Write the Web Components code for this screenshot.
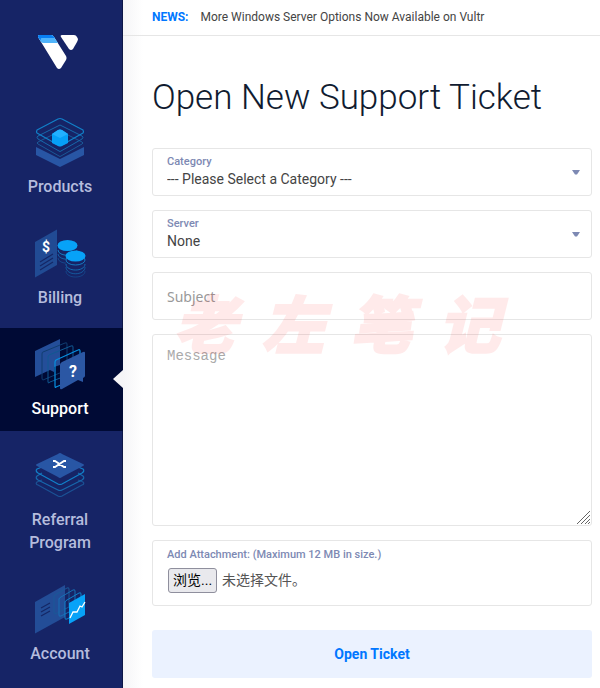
<!DOCTYPE html>
<html lang="en">
<head>
<meta charset="utf-8">
<meta name="viewport" content="width=device-width, initial-scale=1">
<title>Open New Support Ticket</title>
<style>
    html, body {
        margin: 0;
        min-height: 100%;
        background: #fff;
    }
    body {
        font-family: Roboto, "Noto Sans CJK SC", sans-serif;
        color: #444;
        --blue: #0077ff;
        --label: #7d89b3;
        --line: #e6e6e6;
    }
</style>
</head>
<body>
<support-app></support-app>

<script>
const icons = {
    products: `
        <path d="M1 30 25 42 49 30V38L25 50 1 38Z" fill="#2856a5"/>
        <g fill="none" stroke-linejoin="round">
            <path d="M25 14 47 25Q49 26 47 27L26 39Q25 40 24 39L3 27Q1 26 3 25Z" stroke="#1a5897"/>
            <path d="M25 8 47 19Q49 20 47 22L26 34Q25 35 24 34L3 22Q1 20 3 19Z" stroke="#1768aa"/>
            <path d="M23 2Q25 1 27 2L48 13Q49 15 48 16L27 28Q25 29 23 28L2 16Q1 15 2 13Z" stroke="#1180c9" stroke-width="1.200"/>
        </g>
        <path d="M17 17 23 13Q25 12 27 13L33 17V26L27 29Q25 30 23 29L17 26Z" fill="#06a0f7"/>
        <path d="M17 17 23 13Q25 12 27 13L33 17 25 21Z" fill="#22b0ff"/>`,
    billing: `
        <path d="M0 14 22 1.500V37L0 49.500Z" fill="#214b94"/>
        <text x="11" y="24" text-anchor="middle" font-size="14" font-weight="700" fill="#fff">$</text>
        <path d="M5 34 18 26M5 38 18 30M5 42 18 34" stroke="#152765" stroke-width="1.200"/>
        <g fill="none" stroke="#147bc2">
            <path d="M23 22C23 29 42 29 42 22"/>
            <path d="M23 26C23 33 42 33 42 26" opacity=".7"/>
            <path d="M23 30C23 37 42 37 42 30" opacity=".4"/>
        </g>
        <ellipse cx="32.500" cy="17.500" rx="10" ry="5.500" fill="#07a2f8"/>
        <path d="M31 28V43H50V28Z" fill="#162466"/>
        <g fill="none" stroke="#147bc2">
            <ellipse cx="40.500" cy="32" rx="9.500" ry="5"/>
            <path d="M31 36C31 44 50 44 50 36" opacity=".8"/>
            <path d="M31 39C31 48 50 48 50 39" opacity=".6"/>
            <path d="M31 43C31 51 50 51 50 43" opacity=".35"/>
        </g>
        <ellipse cx="40.500" cy="28" rx="10" ry="5.500" fill="#07a2f8"/>`,
    support: `
        <path d="M0 12 25 0V26L19 28V33L15 31 0 38Z" fill="#244e99"/>
        <g fill="none" stroke-linejoin="round">
            <path d="M8 13 30 4Q32 3 32 5V31L8 41Q7 41 7 39V15Q7 13 8 13Z" stroke="#103d70"/>
            <path d="M14 16 36 7Q38 6 38 8V34L15 43Q13 45 13 43V19Q13 17 14 16Z" stroke="#105992"/>
            <path d="M21 21 43 11Q45 10 45 12V38L21 48Q20 49 20 47V23Q20 22 21 21Z" stroke="#078fdf" stroke-width="1.200"/>
        </g>
        <path d="M27 23 48 13Q50 12 50 14V37Q50 38 48 39V43L43 41 27 50Q25 51 25 49V26Q25 24 27 23Z" fill="#2b57a4"/>
        <text x="38" y="38" text-anchor="middle" font-size="16" font-weight="700" fill="#fff">?</text>`,
    referral: `
        <g fill="none" stroke-linejoin="round" stroke-width="1.200">
            <path d="M7 30 2 32Q0 34 3 35L23 46Q25 47 27 46L47 35Q50 34 48 32L43 30" stroke="#1b5295"/>
            <path d="M7 23 2 26Q0 28 3 30L23 40Q25 41 27 40L47 30Q50 28 48 26L43 23" stroke="#1768ad"/>
            <path d="M7 17 2 19Q0 21 3 23L23 34Q25 35 27 34L47 23Q50 21 48 19L43 17" stroke="#1180c9"/>
        </g>
        <path d="M23 4Q25 2 27 4L48 14Q50 15 48 16L27 27Q25 29 23 27L2 16Q0 15 2 14Z" fill="#2856a5"/>
        <path d="M18 11H20L29 17H31M18 17H20L29 11H31" fill="none" stroke="#fff" stroke-width="1.800"/>`,
    account: `
        <path d="M0 18 30 1V33L0 49.500Z" fill="#234d97"/>
        <path d="M6 24 15 19M6 28 15 23M6 32 15 27" stroke="#152765" stroke-width="1.200"/>
        <g fill="none" stroke-linejoin="round">
            <path d="M20 11 32 4Q34 3 34 5V23L20 30Q19 30 19 28V13Q19 12 20 11Z" stroke="#1a5898"/>
            <path d="M26 13 38 6Q40 5 40 7V25L26 32Q24 33 24 31V15Q24 14 26 13Z" stroke="#176fb4"/>
            <path d="M32 16 44 9Q46 8 46 10V28L32 35Q30 36 30 34V18Q30 17 32 16Z" stroke="#1180c9"/>
        </g>
        <path d="M34 19 50 10V31L34 40Z" fill="#07a2f8"/>
        <path d="M35 34 38 28 42 28 45 22 47 23 50 18" fill="none" stroke="#fff" stroke-width="1.300"/>`
};

class SupportApp extends HTMLElement {
    constructor() {
        super();
        this.attachShadow({ mode: 'open' });
        this.shadowRoot.innerHTML = `
            <style>
                :host {
                    display: grid;
                    grid-template-columns: 123px minmax(0, 1fr);
                    min-height: 100vh;
                }
                main {
                    background: linear-gradient(90deg, #f5f5f7, #fff 20px);
                }
                .content {
                    padding: 37px 8px 8px 29px;
                }
                h1 {
                    margin: 0 0 25px;
                    font-size: 35px;
                    line-height: 50px;
                    font-weight: 300;
                    color: #101b30;
                }
            </style>
            <side-nav>
                <nav-item icon="products">Products</nav-item>
                <nav-item icon="billing">Billing</nav-item>
                <nav-item icon="support" active>Support</nav-item>
                <nav-item icon="referral">Referral Program</nav-item>
                <nav-item icon="account">Account</nav-item>
            </side-nav>
            <main>
                <news-bar>More Windows Server Options Now Available on Vultr</news-bar>
                <div class="content">
                    <h1>Open New Support Ticket</h1>
                    <ticket-form></ticket-form>
                </div>
            </main>`;
    }
}

class SideNav extends HTMLElement {
    constructor() {
        super();
        this.attachShadow({ mode: 'open' });
        this.shadowRoot.innerHTML = `
            <style>
                :host {
                    display: block;
                    background: #162466;
                    box-shadow: inset -1px 0 #0d1747;
                }
                nav {
                    display: flex;
                    flex-direction: column;
                    gap: 8px;
                }
                .logo {
                    display: block;
                    padding: 35px 0 33px 38px;
                }
                svg {
                    display: block;
                }
            </style>
            <a class="logo" href="#" aria-label="Home">
                <svg width="40" height="38" viewBox="0 0 40 38">
                    <path d="M0 2Q-1 0 2 0H13Q15 0 16 2L28 21Q29 23 28 25L23 33Q21 35 19 33Z" fill="#fff"/>
                    <path d="M0 2Q-1 0 2 0H13Q15 0 16 2L20 8H6Q4 8 3 7Z" fill="#50b4fb"/>
                    <path d="M0 2Q-1 0 2 0H13Q15 0 17 3H4Q2 3 3 6Z" fill="#087ef2"/>
                    <path d="M23 2Q22 0 24 0H36Q38 0 39 2L40 4Q40 5 39 7L35 14Q33 16 31 14Z" fill="#fff"/>
                </svg>
            </a>
            <nav><slot></slot></nav>`;
    }
}

class NavItem extends HTMLElement {
    constructor() {
        super();
        this.attachShadow({ mode: 'open' });
    }

    connectedCallback() {
        this.shadowRoot.innerHTML = `
            <style>
                :host {
                    display: block;
                    position: relative;
                    color: #b5bcdd;
                }
                :host([active]) {
                    background: #000a35;
                    color: #fff;
                }
                :host([active])::after {
                    content: "";
                    position: absolute;
                    right: 0;
                    top: 42px;
                    border: solid transparent;
                    border-width: 9px 10px 9px 0;
                    border-right-color: #f5f5f7;
                }
                a {
                    display: flex;
                    flex-direction: column;
                    align-items: center;
                    gap: 8px;
                    padding: 11px 20px 11px 17px;
                    color: inherit;
                    font-size: 16px;
                    line-height: 23px;
                    font-weight: 500;
                    text-align: center;
                    text-decoration: none;
                }
                svg {
                    display: block;
                    overflow: visible;
                }
            </style>
            <a href="#">
                <svg width="50" height="50" viewBox="0 0 50 50">${icons[this.getAttribute('icon')]}</svg>
                <slot></slot>
            </a>`;
    }
}

class NewsBar extends HTMLElement {
    constructor() {
        super();
        this.attachShadow({ mode: 'open' });
        this.shadowRoot.innerHTML = `
            <style>
                :host {
                    display: flex;
                    gap: 12px;
                    padding: 7px 8px 8px 29px;
                    border-bottom: 1px solid var(--line);
                    font-size: 12px;
                    line-height: 20px;
                }
                b {
                    color: var(--blue);
                }
            </style>
            <b>NEWS:</b>
            <span><slot></slot></span>`;
    }
}

class SelectField extends HTMLElement {
    constructor() {
        super();
        this.attachShadow({ mode: 'open' });
    }

    connectedCallback() {
        this.shadowRoot.innerHTML = `
            <style>
                :host {
                    display: grid;
                    grid-template-areas: "box";
                    background: #fff;
                    border: 1px solid var(--line);
                    border-radius: 3px;
                }
                label, select, svg {
                    grid-area: box;
                }
                label {
                    z-index: 1;
                    justify-self: start;
                    align-self: start;
                    padding: 6px 14px 0;
                    font-size: 11px;
                    line-height: 14px;
                    font-weight: 500;
                    color: var(--label);
                }
                select {
                    appearance: none;
                    width: 100%;
                    height: 46px;
                    margin: 0;
                    padding: 16px 30px 2px 14px;
                    border: 0;
                    border-radius: 3px;
                    background: transparent;
                    font: 14px Roboto, sans-serif;
                    color: #444;
                }
                svg {
                    justify-self: end;
                    align-self: center;
                    margin-right: 11px;
                    pointer-events: none;
                }
            </style>
            <label for="value">${this.getAttribute('label')}</label>
            <select id="value"><option>${this.getAttribute('value')}</option></select>
            <svg width="8" height="5" viewBox="0 0 8 5"><path d="M0 0H8L5 4.500H3Z" fill="#7d89b3"/></svg>`;
    }
}

class FileField extends HTMLElement {
    constructor() {
        super();
        this.attachShadow({ mode: 'open' });
        this.shadowRoot.innerHTML = `
            <style>
                :host {
                    display: block;
                    padding: 7px 14px 12px;
                    background: #fff;
                    border: 1px solid var(--line);
                    border-radius: 3px;
                }
                .title {
                    display: block;
                    margin-bottom: 6px;
                    font-size: 11px;
                    line-height: 14px;
                    font-weight: 500;
                    color: var(--label);
                }
                .picker {
                    display: flex;
                    align-items: center;
                    gap: 5px;
                    position: relative;
                    margin-left: 1px;
                    font-size: 14px;
                    line-height: 23px;
                    color: #555;
                }
                .browse {
                    padding: 0 4px;
                    border: 1px solid #8f8f9d;
                    border-radius: 3px;
                    background: #e9e9ed;
                    color: #000;
                }
                input {
                    position: absolute;
                    inset: 0;
                    width: 100%;
                    opacity: 0;
                }
            </style>
            <label class="title" for="file">Add Attachment: (Maximum 12 MB in size.)</label>
            <div class="picker" lang="zh-CN">
                <span class="browse">浏览...</span>
                <span class="name">未选择文件。</span>
                <input id="file" type="file">
            </div>`;

        const input = this.shadowRoot.getElementById('file');
        input.addEventListener('change', () => {
            if (input.files.length) {
                this.shadowRoot.querySelector('.name').textContent = input.files[0].name;
            }
        });
    }
}

class WaterMark extends HTMLElement {
    constructor() {
        super();
        this.attachShadow({ mode: 'open' });
        this.shadowRoot.innerHTML = `
            <style>
                :host {
                    display: flex;
                    gap: 26px;
                    pointer-events: none;
                    font: italic 900 62px/62px "Noto Sans CJK SC", sans-serif;
                    color: #f00;
                    -webkit-text-stroke: 2px #f00;
                    opacity: .08;
                }
            </style>
            <span>老</span><span>左</span><span>笔</span><span>记</span>`;
    }
}

class TicketForm extends HTMLElement {
    constructor() {
        super();
        this.attachShadow({ mode: 'open' });
        this.shadowRoot.innerHTML = `
            <style>
                :host {
                    display: block;
                    position: relative;
                }
                form {
                    display: flex;
                    flex-direction: column;
                    gap: 14px;
                }
                input, textarea {
                    display: block;
                    box-sizing: border-box;
                    width: 100%;
                    margin: 0;
                    padding: 0 14px;
                    border: 1px solid var(--line);
                    border-radius: 3px;
                    background: #fff;
                    color: #444;
                }
                input {
                    height: 48px;
                    font: 14px "Noto Sans", sans-serif;
                }
                textarea {
                    height: 192px;
                    padding: 12px 14px;
                    font: 14px/18px "Liberation Mono", monospace;
                    resize: vertical;
                }
                textarea::-webkit-resizer {
                    background: transparent;
                }
                ::placeholder {
                    color: #999;
                }
                textarea::placeholder {
                    color: #aaa;
                }
                .message {
                    position: relative;
                }
                .grip {
                    position: absolute;
                    right: 2px;
                    bottom: 2px;
                    pointer-events: none;
                }
                button {
                    height: 48px;
                    margin-top: 10px;
                    border: 0;
                    border-radius: 3px;
                    background: #ebf2ff;
                    font: 700 14px Roboto, sans-serif;
                    color: var(--blue);
                }
                water-mark {
                    position: absolute;
                    left: 22px;
                    top: 142px;
                }
            </style>
            <form>
                <select-field label="Category" value="--- Please Select a Category ---"></select-field>
                <select-field label="Server" value="None"></select-field>
                <input type="text" aria-label="Subject" placeholder="Subject">
                <div class="message">
                    <textarea aria-label="Message" placeholder="Message"></textarea>
                    <svg class="grip" width="13" height="13" viewBox="0 0 13 13">
                        <path d="M0 13 13 0M4 13 13 4M8 13 13 8M11 13 13 11" stroke="#666"/>
                    </svg>
                </div>
                <file-field></file-field>
                <button type="button">Open Ticket</button>
            </form>
            <water-mark></water-mark>`;
    }
}

customElements.define('support-app', SupportApp);
customElements.define('side-nav', SideNav);
customElements.define('nav-item', NavItem);
customElements.define('news-bar', NewsBar);
customElements.define('select-field', SelectField);
customElements.define('file-field', FileField);
customElements.define('water-mark', WaterMark);
customElements.define('ticket-form', TicketForm);
</script>
</body>
</html>
